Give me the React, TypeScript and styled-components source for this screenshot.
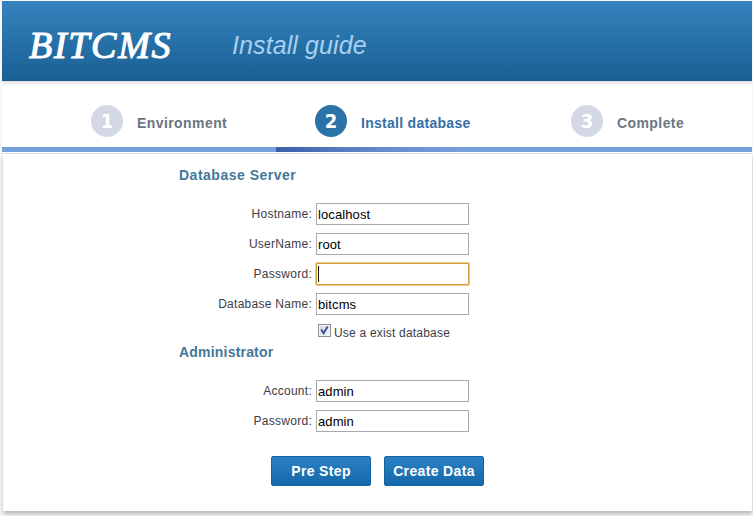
import React from "react";
import styled, { createGlobalStyle } from "styled-components";

const GlobalStyle = createGlobalStyle`
  * { box-sizing: border-box; }
  body {
    margin: 0;
    background: #f7f7f7;
    font-family: "Liberation Sans", Arial, sans-serif;
    overflow: hidden;
  }
`;

const Page = styled.div`
  height: 516px;
  padding: 1px 1px 0 2px;
`;

const Header = styled.header`
  display: flex;
  height: 80px;
  padding-left: 28px;
  background: linear-gradient(#3583be, #1a6094);
  border-bottom: 1px solid #1c5a8a;
`;

const Logo = styled.h1`
  width: 203px;
  margin: 0 0 0 -1px;
  padding-top: 22px;
  font: italic 400 38px/44px "Liberation Serif", serif;
  letter-spacing: 1.7px;
  color: #fff;
  -webkit-text-stroke: 1.1px #fff;
`;

const Subtitle = styled.h2`
  margin: 0;
  padding-top: 29px;
  font: italic 400 25px/30px "Liberation Sans", sans-serif;
  letter-spacing: 0.1px;
  color: #a9cff2;
`;

const Steps = styled.ol`
  display: grid;
  grid-template-columns: 224px 256px 1fr;
  height: 66px;
  margin: 0;
  padding: 0 0 0 89px;
  list-style: none;
  background: linear-gradient(#dfe2ea, #f2f3f7 3px, #fff 5px);
`;

const Step = styled.li<{ $active?: boolean }>`
  display: flex;
  gap: 14px;
  padding-top: 24px;
  font-size: 14px;
  font-weight: 700;
  line-height: 36px;
  letter-spacing: ${(p) => (p.$active ? "0.28px" : "0.42px")};
  color: ${(p) => (p.$active ? "#356fa4" : "#6c7681")};
`;

const StepNumber = styled.span<{ $active?: boolean }>`
  width: 32px;
  height: 32px;
  border-radius: 50%;
  background: ${(p) => (p.$active ? "#2a72a8" : "#d3d9e4")};
  color: #fff;
  font: 700 20px/32px "DejaVu Sans Condensed", "DejaVu Sans", sans-serif;
  letter-spacing: 0;
  text-align: center;
`;

const Progress = styled.div`
  height: 7px;
  border-bottom: 1px solid #e0e0ec;
  background:
    linear-gradient(90deg, #3860a8, #6787cc 100px, #76a0dc 190px) 274px 0 / 100% 5px no-repeat,
    linear-gradient(#76a0dc, #76a0dc) 0 0 / 100% 5px no-repeat,
    #fff;
`;

const Panel = styled.main`
  height: 357px;
  margin: 0 0 0 1px;
  background: #fff;
  box-shadow: 0 3px 4px rgba(0, 0, 0, 0.25);
  padding: 12px 0 0 176px;
`;

const SectionTitle = styled.h3<{ $tracking: number }>`
  margin: 0;
  font-size: 14px;
  line-height: 18px;
  letter-spacing: ${(p) => p.$tracking}px;
  color: #447799;
`;

const Fields = styled.div`
  display: grid;
  gap: 8px;
  padding-top: 19px;
`;

const Field = styled.label`
  display: grid;
  grid-template-columns: 133px 153px;
  gap: 4px;
  height: 22px;
  font-size: 12px;
  line-height: 22px;
  letter-spacing: 0.27px;
  text-align: right;
  color: #3c3c46;
`;

const TextInput = styled.input<{ $focused?: boolean }>`
  width: 153px;
  height: 22px;
  margin: 0;
  padding: 1px 1px 0;
  border: 1px solid ${(p) => (p.$focused ? "#d2a03c" : "#a9a9b0")};
  border-radius: ${(p) => (p.$focused ? "1px" : "0")};
  outline: 0;
  box-shadow: ${(p) => (p.$focused ? "0 0 0 1px #ecca84" : "none")};
  background: ${(p) => (p.$focused ? "linear-gradient(#111, #111) 1px 2px / 1px 16px no-repeat #fff" : "#fff")};
  font: 13px "Liberation Sans", sans-serif;
  letter-spacing: 0.1px;
  color: #000;
`;

const CheckRow = styled.label`
  display: flex;
  gap: 3px;
  height: 28px;
  padding: 9px 0 0 139px;
  font-size: 12px;
  line-height: 18px;
  letter-spacing: 0.2px;
  color: #3c3c46;
`;

const CheckBox = styled.span`
  width: 13px;
  height: 13px;
  border: 1px solid #8e8f8f;
  background: linear-gradient(135deg, #cfd6e0, #f7f7f8);
  box-shadow: inset 0 0 0 1px #f3f3f3;
  svg { display: block; }
`;

const Actions = styled.div`
  display: flex;
  gap: 13px;
  padding: 24px 0 0 92px;
`;

const Button = styled.button`
  width: 100px;
  height: 30px;
  padding: 0;
  border: 1px solid #1663a1;
  border-radius: 2px;
  background: linear-gradient(#2a82c5, #1568a9);
  color: #fff;
  font: 700 14px/28px "Liberation Sans", sans-serif;
  letter-spacing: 0.35px;
  white-space: nowrap;
`;

const steps = ["Environment", "Install database", "Complete"];

const serverFields = [
  { label: "Hostname:", value: "localhost" },
  { label: "UserName:", value: "root" },
  { label: "Password:", value: "", focused: true },
  { label: "Database Name:", value: "bitcms" },
];

const adminFields = [
  { label: "Account:", value: "admin" },
  { label: "Password:", value: "admin" },
];

function FieldList({ items }: { items: { label: string; value: string; focused?: boolean }[] }) {
  return (
    <Fields>
      {items.map((f) => (
        <Field key={f.label}>
          {f.label}
          <TextInput defaultValue={f.value} $focused={f.focused} />
        </Field>
      ))}
    </Fields>
  );
}

export default function App() {
  return (
    <Page>
      <GlobalStyle />
      <Header>
        <Logo>BITCMS</Logo>
        <Subtitle>Install guide</Subtitle>
      </Header>
      <Steps>
        {steps.map((s, i) => (
          <Step key={s} $active={i === 1}>
            <StepNumber $active={i === 1}>{i + 1}</StepNumber>
            {s}
          </Step>
        ))}
      </Steps>
      <Progress />
      <Panel>
        <SectionTitle $tracking={0.5}>Database Server</SectionTitle>
        <FieldList items={serverFields} />
        <CheckRow>
          <CheckBox>
            <svg width="11" height="11" viewBox="0 0 11 11" fill="none">
              <path d="M2.2 4.6 4.6 8.3 8.7 1.5" stroke="#3d4f9c" strokeWidth="1.9" />
            </svg>
          </CheckBox>
          Use a exist database
        </CheckRow>
        <SectionTitle $tracking={0.2}>Administrator</SectionTitle>
        <FieldList items={adminFields} />
        <Actions>
          <Button>Pre Step</Button>
          <Button>Create Data</Button>
        </Actions>
      </Panel>
    </Page>
  );
}
